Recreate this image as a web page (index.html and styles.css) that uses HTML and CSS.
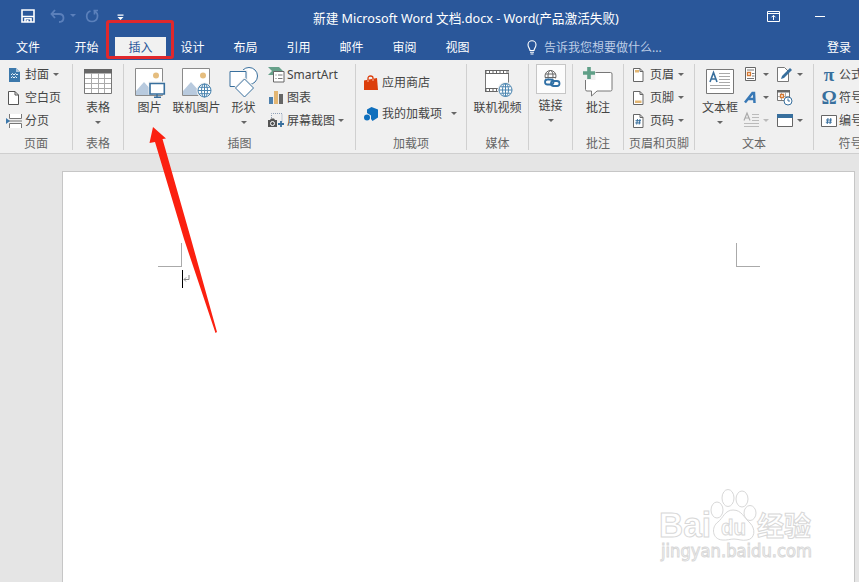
FILE: index.html
```html
<!DOCTYPE html>
<html lang="zh-CN">

<head>
    <meta charset="UTF-8">
    <meta name="viewport" content="width=device-width, initial-scale=1.0">
    <title>新建 Microsoft Word 文档.docx - Word</title>
    <link rel="stylesheet" href="styles.css">
</head>

<body>
    <header class="titlebar">
        <div class="quick-access">
            <svg class="save" width="14" height="14" viewBox="0 0 14 14"><path d="M1 1h12v12H1z" fill="none" stroke="#fff" stroke-width="1.6"/><path d="M1 7.500h12M4 13V9.800h6V13" fill="none" stroke="#fff" stroke-width="1.6"/><path d="M5.500 11h2v2h-2z" fill="#fff"/></svg>
            <svg class="undo" width="15" height="14" viewBox="0 0 15 14"><path d="M5 1L1.500 5 5 9M2 5h7c6 0 6 8 0 8" fill="none" stroke="#5b80bb" stroke-width="1.800"/></svg>
            <span class="caret dim"></span>
            <svg class="redo" width="15" height="14" viewBox="0 0 15 14"><path d="M8.500 1.500H13M9.500 1v4.500M5.500 2C0 4 .5 12.500 7 12.500c6 0 7.500-7.500 2.500-10.500" fill="none" stroke="#5b80bb" stroke-width="1.700"/></svg>
            <svg class="customize" width="7" height="7" viewBox="0 0 7 7"><path d="M.5.500h6v1.200h-6zM.5 3h6l-3 3z" fill="#fff"/></svg>
        </div>
        <div class="doc-title">新建 Microsoft Word 文档.docx - Word(产品激活失败)</div>
        <div class="window-buttons">
            <svg width="13" height="11" viewBox="0 0 13 11"><path d="M.5.500h12v10H.500zM.5 2.500h12M6.500 9V4.500M4.500 6.300l2-2 2 2" fill="none" stroke="#fff"/></svg>
            <span class="minimize"></span>
        </div>
    </header>

    <nav class="tabs">
        <span class="tab file">文件</span>
        <span class="tab">开始</span>
        <span class="tab active"><b>插入</b></span>
        <span class="tab">设计</span>
        <span class="tab">布局</span>
        <span class="tab">引用</span>
        <span class="tab">邮件</span>
        <span class="tab">审阅</span>
        <span class="tab">视图</span>
        <span class="tell-me">
            <svg width="10" height="15" viewBox="0 0 10 15"><path d="M3 10.500C3 8.500 1 7.500 1 4.800a4 4 0 0 1 8 0C9 7.500 7 8.500 7 10.500zM3 12.300h4M3.500 14h3" fill="none" stroke="#fff" stroke-width="1.100"/></svg>
            告诉我您想要做什么...
        </span>
        <span class="sign-in">登录</span>
    </nav>

    <section class="ribbon">
        <div class="group pages">
            <div class="group-body">
                <div class="rows">
                    <div class="item">
                        <svg width="16" height="16" viewBox="0 0 16 16"><path d="M3 1h7l4 4v10H3z" fill="#3c78ab"/><path d="M10 1v4h4" fill="#a9c6dd"/><path d="M5 8l1.500-1.500L8 8l1.500-1.500L11 8l1-1M5 11l1.500-1.500L8 11l1.500-1.500L11 11" fill="none" stroke="#e8f1f8" stroke-width="1"/></svg>
                        <span>封面</span><i class="caret"></i>
                    </div>
                    <div class="item">
                        <svg width="16" height="16" viewBox="0 0 16 16"><path d="M2.500 1.500H9l3.500 3.500v9.500h-10zM9 1.500V5h3.500" fill="#fff" stroke="#555"/></svg>
                        <span>空白页</span>
                    </div>
                    <div class="item">
                        <svg width="16" height="16" viewBox="0 0 16 16"><path d="M3.500 1v4.500h12V1M3.500 15v-4.500h12V15" fill="#fff" stroke="#777"/><path d="M3 8h13" stroke="#777"/><path d="M0 5l4 3-4 3z" fill="#3c78ab"/></svg>
                        <span>分页</span>
                    </div>
                </div>
            </div>
            <div class="group-label">页面</div>
        </div>

        <div class="group tables">
            <div class="group-body">
                <div class="big">
                    <svg width="30" height="30" viewBox="0 0 30 30"><path d="M1.500 1.500h27v24h-27z" fill="#fff" stroke="#777"/><path d="M1 1h28v4.500H1z" fill="#666"/><path d="M2 10.500h26M2 15.500h26M2 20.500h26M8.500 5v20M15.500 5v20M21.500 5v20" stroke="#aaa"/></svg>
                    <span>表格</span><i class="caret"></i>
                </div>
            </div>
            <div class="group-label">表格</div>
        </div>

        <div class="group illustrations">
            <div class="group-body">
                <div class="big">
                    <svg width="30" height="30" viewBox="0 0 30 30"><path d="M.500 .500h27v27H.500z" fill="#fff" stroke="#8a8a8a"/><path d="M1 23l8-9 9 10v3H1z" fill="#b8cade"/><circle cx="21" cy="7.500" r="3" fill="#e5bd7e"/><path d="M13.500 13.500h17v13h-17z" fill="#f0f0f0"/><path d="M15 15.500h14.300v10.500H15z" fill="#fff" stroke="#386f9d" stroke-width="1.600"/><path d="M22 26v3M19 29.300h7" stroke="#386f9d" stroke-width="1.400"/></svg>
                    <span>图片</span>
                </div>
                <div class="big">
                    <svg width="30" height="30" viewBox="0 0 30 30"><path d="M.500 .500h27v27H.500z" fill="#fff" stroke="#8a8a8a"/><path d="M1 23l8-9 9 10v3H1z" fill="#b8cade"/><circle cx="21" cy="7.500" r="3" fill="#e5bd7e"/><circle cx="22.500" cy="22.500" r="8" fill="#f0f0f0"/><g fill="#fff" stroke="#4a84af"><circle cx="22.500" cy="22.500" r="6.500"/><ellipse cx="22.500" cy="22.500" rx="3" ry="6.500"/><path d="M16 22.500h13M22.500 16v13M17.300 19.300h10.400M17.300 25.700h10.400" fill="none"/></g></svg>
                    <span>联机图片</span>
                </div>
                <div class="big">
                    <svg width="30" height="30" viewBox="0 0 30 30"><g fill="#fff" stroke="#386f9d"><circle cx="20" cy="8" r="8.500"/><path d="M1 3.500h16v15H1z" stroke="#f0f0f0" stroke-width="3"/><path d="M1 3.500h16v15H1z"/><path d="M15.500 11l9 9-9 9-9-9z" stroke="#f0f0f0" stroke-width="3"/><path d="M15.500 11l9 9-9 9-9-9z"/></g></svg>
                    <span>形状</span><i class="caret"></i>
                </div>
                <div class="rows">
                    <div class="item">
                        <svg width="17" height="17" viewBox="0 0 17 17"><path d="M0 1h11l4 4-4 4H0l4-4z" fill="#67a18a"/><path d="M5.500 5.500h10.500v10.500H5.500z" fill="#fff" stroke="#666"/><path d="M7.500 9h1M10 9h4.500M7.500 12.500h1M10 12.500h4.500" stroke="#777"/></svg>
                        <span>SmartArt</span>
                    </div>
                    <div class="item">
                        <svg width="17" height="17" viewBox="0 0 17 17"><path d="M1 8h4v7H1z" fill="#4d80ad"/><path d="M6 2h4v13H6z" fill="#e3b673"/><path d="M11 5h4v10h-4z" fill="#666"/></svg>
                        <span>图表</span>
                    </div>
                    <div class="item">
                        <svg width="17" height="17" viewBox="0 0 17 17"><path d="M3.500 8V1.500h10.500V10" fill="none" stroke="#8fa0b8" stroke-dasharray="1 1"/><path d="M0 8h2l1-1.500h3L7 8h2v7H0z" fill="#555"/><circle cx="4.500" cy="11.500" r="2" fill="#555" stroke="#fff"/><path d="M13 9v6M10 12h6" stroke="#386f9d" stroke-width="1.800"/></svg>
                        <span>屏幕截图</span><i class="caret"></i>
                    </div>
                </div>
            </div>
            <div class="group-label">插图</div>
        </div>

        <div class="group addins">
            <div class="group-body">
                <div class="rows">
                    <div class="item">
                        <svg width="16" height="16" viewBox="0 0 16 16"><path d="M1 5.500L14 3l1 12H1z" fill="#dc3e0b"/><path d="M5 7V3.500Q5 1 7.500 1T10 3v3" fill="none" stroke="#dc3e0b" stroke-width="1.300"/><path d="M5 5v2M10 4v2" stroke="#f7b59d"/></svg>
                        <span>应用商店</span>
                    </div>
                    <div class="item">
                        <svg width="16" height="16" viewBox="0 0 16 16"><path d="M8.500 1L15 3.500v8L9.500 15 8 13V9.500L4 7V3.500z" fill="#0f6fbd"/><circle cx="4" cy="11.500" r="3" fill="#0f6fbd"/></svg>
                        <span>我的加载项</span><i class="caret"></i>
                    </div>
                </div>
            </div>
            <div class="group-label">加载项</div>
        </div>

        <div class="group media">
            <div class="group-body">
                <div class="big">
                    <svg width="30" height="30" viewBox="0 0 30 30"><path d="M2.500 2.500h23v21h-23z" fill="#fff" stroke="#777"/><path d="M2 4h24M2 22h24" stroke="#666" stroke-width="4"/><path d="M3.500 4h22M3.500 22h22" stroke="#fff" stroke-width="2.200" stroke-dasharray="2.500 1"/><circle cx="22.500" cy="22" r="8" fill="#f0f0f0"/><g fill="#fff" stroke="#4a84af"><circle cx="22.500" cy="22" r="6.500"/><ellipse cx="22.500" cy="22" rx="3" ry="6.500"/><path d="M16 22h13M22.500 15.500v13M17.300 18.800h10.400M17.300 25.200h10.400" fill="none"/></g></svg>
                    <span>联机视频</span>
                </div>
            </div>
            <div class="group-label">媒体</div>
        </div>

        <div class="group links">
            <div class="group-body">
                <div class="big">
                    <svg class="boxed" width="30" height="30" viewBox="0 0 30 30"><g fill="none" stroke="#666"><circle cx="14.500" cy="12" r="5.500"/><ellipse cx="14.500" cy="12" rx="2.500" ry="5.500"/><path d="M9.500 10h10M9 13.500h11"/></g><path d="M8 14.500h17v8H8z" fill="#fcfcfc"/><g fill="none" stroke="#2f6fa5" stroke-width="1.800"><rect x="9" y="15.500" width="8.500" height="5" rx="2.500"/><rect x="15" y="17" width="8.500" height="5" rx="2.500"/></g></svg>
                    <span>链接</span><i class="caret"></i>
                </div>
            </div>
            <div class="group-label"></div>
        </div>

        <div class="group comments">
            <div class="group-body">
                <div class="big">
                    <svg width="30" height="30" viewBox="0 0 30 30"><path d="M2.500 4.500h25q1.500 0 1.500 1.500v15.500q0 1.500-1.500 1.500H14l-5.500 5V23H4q-1.500 0-1.500-1.500z" fill="#fff" stroke="#777"/><path d="M0 0h12.500v12H0z" fill="#f0f0f0"/><path d="M6 -1v12M0 5h12" stroke="#5f9f87" stroke-width="3.600"/></svg>
                    <span>批注</span>
                </div>
            </div>
            <div class="group-label">批注</div>
        </div>

        <div class="group header-footer">
            <div class="group-body">
                <div class="rows">
                    <div class="item">
                        <svg width="13" height="16" viewBox="0 0 13 16"><path d="M1.500 1.500h6.500l3 3v10h-9.500zM8 1.500v3h3" fill="#fff" stroke="#666"/><path d="M3 3h4v2.500H3z" fill="#e3b673"/></svg>
                        <span>页眉</span><i class="caret"></i>
                    </div>
                    <div class="item">
                        <svg width="13" height="16" viewBox="0 0 13 16"><path d="M1.500 1.500h6.500l3 3v10h-9.500zM8 1.500v3h3" fill="#fff" stroke="#666"/><path d="M3 10.500h6.500V13H3z" fill="#e3b673"/></svg>
                        <span>页脚</span><i class="caret"></i>
                    </div>
                    <div class="item">
                        <svg width="13" height="16" viewBox="0 0 13 16"><path d="M1.500 1.500h6.500l3 3v10h-9.500zM8 1.500v3h3" fill="#fff" stroke="#666"/><path d="M5.500 6l-.8 5.500M8 6l-.8 5.500M3.500 7.700H9M3.300 9.900h5.400" stroke="#386f9d" fill="none"/></svg>
                        <span>页码</span><i class="caret"></i>
                    </div>
                </div>
            </div>
            <div class="group-label">页眉和页脚</div>
        </div>

        <div class="group text">
            <div class="group-body">
                <div class="big">
                    <svg width="30" height="30" viewBox="0 0 30 30"><path d="M1.500 1.500h27v24h-27z" fill="#fff" stroke="#777"/><path d="M5 14l3.500-9.500L12 14M6.300 11h4.400" fill="none" stroke="#386f9d" stroke-width="1.600"/><path d="M14 5.500h11M14 8.500h11M14 11.500h11M14 14.500h11M5 17.500h20M5 20.500h20" stroke="#aaa"/></svg>
                    <span>文本框</span><i class="caret"></i>
                </div>
                <div class="rows">
                    <div class="item">
                        <svg width="17" height="17" viewBox="0 0 17 17"><path d="M2.500 1.500h10v13h-10z" fill="#fff" stroke="#666"/><path d="M4 4h7M9 7.500h2.500M9 10h2.500M4 12.500h7" stroke="#777"/><path d="M4.500 6.500h3v3h-3z" fill="#fff" stroke="#d57932" stroke-width="1.300"/></svg>
                        <i class="caret"></i>
                    </div>
                    <div class="item">
                        <svg width="17" height="17" viewBox="0 0 17 17"><path d="M2 13.500L9.500 4h1.500l.5 10M5.500 10h6" fill="none" stroke="#3878b5" stroke-width="2.500"/></svg>
                        <i class="caret"></i>
                    </div>
                    <div class="item">
                        <svg width="17" height="17" viewBox="0 0 17 17"><path d="M1 8.500L4 1l3 7.500M2 6h4" fill="none" stroke="#aaa" stroke-width="1.200"/><path d="M9 2.500h7M9 5.500h7M9 8.500h7M1 11.500h15M1 14.500h15" stroke="#bbb"/></svg>
                        <i class="caret light"></i>
                    </div>
                </div>
                <div class="rows">
                    <div class="item">
                        <svg width="17" height="17" viewBox="0 0 17 17"><path d="M1.500 1.500h7l4 4v10h-11z" fill="#fff" stroke="#777"/><path d="M5 13l1-3 8-8 2 2-8 8z" fill="#386f9d"/></svg>
                        <i class="caret"></i>
                    </div>
                    <div class="item">
                        <svg width="17" height="17" viewBox="0 0 17 17"><path d="M1.500 1.500h12v10h-12z" fill="#fff" stroke="#777"/><path d="M1 1h13v2.500H1z" fill="#666"/><path d="M2 7.500h11M5.500 3v8M9.500 3v8" stroke="#aaa"/><path d="M4.500 5.500h3v3h-3z" fill="#fff" stroke="#d57932" stroke-width="1.300"/><circle cx="12" cy="12" r="4" fill="#fff" stroke="#386f9d"/><path d="M12 9.500V12h2" fill="none" stroke="#386f9d"/></svg>
                    </div>
                    <div class="item">
                        <svg width="17" height="17" viewBox="0 0 17 17"><path d="M1.500 2.500h15v12h-15z" fill="#fff" stroke="#666"/><path d="M1 2h16v4H1z" fill="#386f9d"/></svg>
                        <i class="caret"></i>
                    </div>
                </div>
            </div>
            <div class="group-label">文本</div>
        </div>

        <div class="group symbols">
            <div class="group-body">
                <div class="rows">
                    <div class="item"><em>π</em><span>公式</span></div>
                    <div class="item"><em>Ω</em><span>符号</span></div>
                    <div class="item">
                        <svg width="16" height="14" viewBox="0 0 16 14"><path d="M.500 1.500h15v11H.500z" fill="#fff" stroke="#666"/><path d="M7 4l-.8 6M9.800 4L9 10M5 6h6M4.800 8.200h6" stroke="#386f9d" fill="none"/></svg>
                        <span>编号</span>
                    </div>
                </div>
            </div>
            <div class="group-label">符号</div>
        </div>
    </section>

    <main class="workspace">
        <div class="page">
            <div class="margins">
                <span class="corner left"></span>
                <span class="corner right"></span>
            </div>
            <div class="first-line">
                <span class="cursor"></span>
                <svg width="7" height="8" viewBox="0 0 7 8"><path d="M6 0v4.500H1M3 2.500l-2 2 2 2" fill="none" stroke="#888"/></svg>
            </div>
        </div>
    </main>

    <!-- annotations over the window -->
    <div class="highlight-box"></div>
    <svg class="arrow" width="70" height="210" viewBox="0 0 70 210"><path d="M5 0L18 11.500 14.500 12 43 112 69 205 67.500 206 36 112 7 15 1.500 16z" fill="#fb2010"/></svg>
    <svg class="watermark" width="160" height="76" viewBox="0 0 160 76">
        <g class="outline">
            <text x="3" y="51" font-size="35" textLength="52" lengthAdjust="spacingAndGlyphs" class="latin">Bai</text>
            <ellipse cx="61" cy="24" rx="6" ry="8"/>
            <ellipse cx="72" cy="12" rx="6" ry="8.500"/>
            <ellipse cx="86" cy="13" rx="6" ry="8"/>
            <ellipse cx="94" cy="27" rx="6" ry="7.500"/>
            <path d="M77 24c-8 0-10 8-15 12-7 5-6 17 4 18 5 .5 8-1 12-1s8 2 13 1c8-1 9-11 3-17-6-5-8-13-17-13z"/>
            <text x="65" y="49" font-size="22" textLength="25" lengthAdjust="spacingAndGlyphs" class="latin">du</text>
            <text x="101" y="50" font-size="27" textLength="54" lengthAdjust="spacingAndGlyphs" class="cjk">经验</text>
            <text x="5" y="71" font-size="17" textLength="151" lengthAdjust="spacingAndGlyphs">jingyan.baidu.com</text>
        </g>
    </svg>
</body>

</html>
```
FILE: styles.css
```css
* {
    box-sizing: border-box;
}

body {
    position: relative;
    margin: 0;
    height: 582px;
    overflow: hidden;
    display: flex;
    flex-direction: column;
    font: 12px/16px "Noto Sans", "Noto Sans CJK SC", sans-serif;
    color: #444;
    background: #e5e5e5;
}

svg {
    display: block;
    flex: none;
    overflow: visible;
}

.titlebar {
    display: grid;
    grid-template-columns: 313px 1fr 92px;
    flex: none;
    height: 34px;
    background: #2a579a;
    color: #fff;
}

.quick-access {
    display: flex;
    align-items: center;
    padding: 0 0 3px 21px;
}

.undo {
    margin-left: 15px;
}

.quick-access .caret {
    margin-left: 5px;
}

.redo {
    margin-left: 9px;
}

.customize {
    margin: 4px 0 0 17px;
}

.doc-title {
    padding-top: 10px;
    font-size: 12.65px;
    white-space: nowrap;
}

.window-buttons {
    display: flex;
    align-items: center;
    gap: 35px;
    padding-bottom: 2px;
}

.minimize {
    width: 10px;
    height: 1px;
    background: #fff;
}

.tabs {
    display: flex;
    align-items: center;
    flex: none;
    height: 26px;
    padding-top: 1px;
    background: #2a579a;
    color: #fff;
    white-space: nowrap;
}

.tab {
    width: 53px;
    text-align: center;
}

.tab.file {
    width: 56px;
    margin-right: 4px;
}

.tab.active b {
    display: block;
    width: 51px;
    margin-left: 2px;
    padding: 3px 0;
    font-weight: normal;
    background: #f1f1f1;
    color: #2a579a;
}

.tell-me {
    display: flex;
    align-items: center;
    gap: 7px;
    margin-left: 43px;
    color: #bdcde6;
}

.sign-in {
    margin-left: auto;
    padding-right: 8px;
}

.ribbon {
    display: grid;
    grid-template-columns: 73px 51px 232px 111px 62px 44px 51px 71px 119px 80px;
    flex: none;
    height: 94px;
    background: #f0f0f0;
    border-bottom: 1px solid #cfcfcf;
}

.group {
    display: flex;
    flex-direction: column;
    margin: 4px 0 3px;
    border-right: 1px solid #d0d0d0;
}

.group-body {
    display: flex;
    height: 72px;
}

.group-label {
    height: 14px;
    text-align: center;
    color: #666;
    white-space: nowrap;
}

.rows {
    display: flex;
    flex-direction: column;
}

.item {
    display: flex;
    align-items: center;
    gap: 2px;
    height: 23px;
    margin-top: -1px;
    margin-bottom: 1px;
    white-space: nowrap;
}

.big {
    display: flex;
    flex-direction: column;
    align-items: center;
    width: 50px;
    padding-top: 4px;
    white-space: nowrap;
}

.big span {
    margin-top: 2px;
}

.caret {
    width: 0;
    height: 0;
    border: 3px solid transparent;
    border-top-color: #666;
    border-bottom: 0;
}

.item .caret {
    margin-left: 2px;
}

.big .caret {
    margin-top: 5px;
}

.caret.dim {
    border-top-color: #5b80bb;
}

.caret.light {
    border-top-color: #bbb;
}

.pages .rows {
    padding-left: 6px;
}

.pages .item {
    gap: 3px;
}

.pages .item .caret {
    margin-left: 1px;
}

.illustrations .group-body {
    padding-left: 2px;
}

.illustrations .big {
    width: 47px;
}

.illustrations .rows {
    padding-left: 1px;
}

.illustrations .item .caret {
    margin-left: 1px;
}

.addins .rows {
    padding-left: 7px;
}

.addins .item {
    height: 31px;
    margin: 3px 0 -3px;
    gap: 3px;
}

.addins .item .caret {
    margin-left: 6px;
}

.media .big {
    width: 61px;
}

.links .big {
    width: 43px;
    padding-top: 0;
}

.links .boxed {
    outline: 1px solid #c6c6c6;
    outline-offset: -1px;
    background: #fcfcfc;
}

.links .big span {
    margin-top: 4px;
}

.header-footer .rows {
    padding-left: 8px;
}

.header-footer .item {
    gap: 5px;
}

.header-footer .item .caret {
    margin-left: -1px;
}

.text .rows {
    width: 33px;
    margin-left: -2px;
}

.text .rows:last-child {
    width: 35px;
    margin-left: 0;
}

.text .item {
    gap: 0;
}

.text .item .caret {
    margin-left: 3px;
}

.text .rows:last-child .caret {
    margin-left: 4px;
}

.symbols .rows {
    padding-left: 7px;
}

.symbols .item em {
    width: 16px;
    font: bold 19px/20px "Liberation Serif", serif;
    text-align: center;
    color: #386f9d;
}

.symbols .group-label {
    padding-right: 6px;
}

.workspace {
    flex: 1;
    padding: 17px 4px 0 62px;
}

.page {
    height: 440px;
    padding: 71px 94px 0 95px;
    background: #fff;
    border: 1px solid #c6c6c6;
}

.margins {
    display: flex;
    justify-content: space-between;
}

.corner {
    width: 24px;
    height: 24px;
    border-bottom: 1px solid #aaa;
}

.corner.left {
    border-right: 1px solid #aaa;
}

.corner.right {
    border-left: 1px solid #aaa;
}

.first-line {
    display: flex;
    align-items: center;
    padding: 3px 0 0 24px;
}

.cursor {
    width: 1px;
    height: 18px;
    background: #000;
}

.highlight-box {
    position: absolute;
    left: 106px;
    top: 20px;
    width: 68px;
    height: 39px;
    border: 3px solid #e0282c;
    border-radius: 3px;
}

.arrow {
    position: absolute;
    left: 148px;
    top: 127px;
}

.watermark {
    position: absolute;
    left: 656px;
    top: 486px;
}

.outline {
    fill: #fff;
    stroke: #d8d8d8;
    stroke-width: 1;
}

.outline text {
    font-family: "DejaVu Sans", sans-serif;
}

.outline .latin {
    font-family: "Liberation Sans", sans-serif;
    font-weight: bold;
}

.outline .cjk {
    font-family: "Noto Sans CJK SC", sans-serif;
    font-weight: bold;
}
```
